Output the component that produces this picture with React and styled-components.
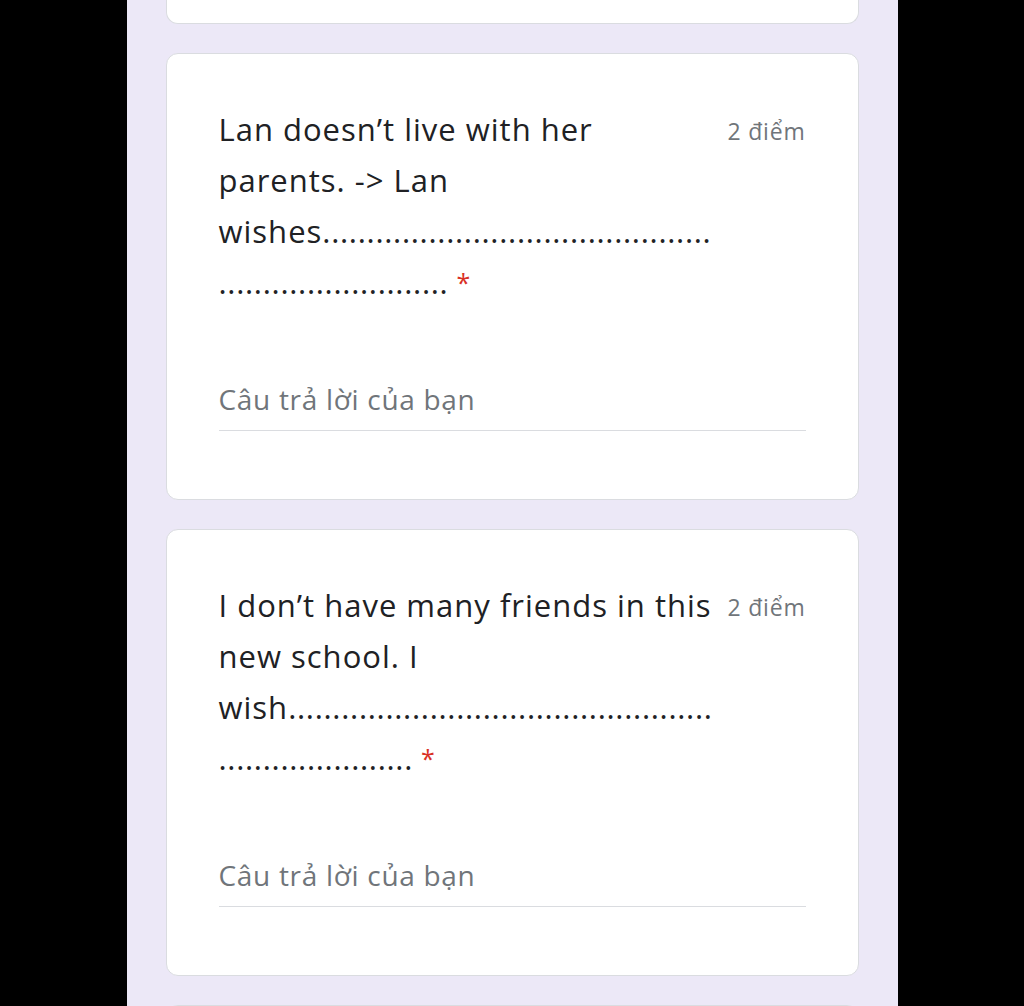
import React from 'react';
import styled, { createGlobalStyle } from 'styled-components';

const GlobalStyle = createGlobalStyle`
  html, body {
    margin: 0;
    padding: 0;
    background: #000;
  }
  body {
    font-family: "Open Sans", Roboto, sans-serif;
  }
`;

const Page = styled.div`
  width: 771px;
  height: 1006px;
  margin: 0 auto;
  padding: 0 39px;
  box-sizing: border-box;
  background: #ece8f7;
  overflow: hidden;
  display: flex;
  flex-direction: column;
  gap: 29px;
`;

const Card = styled.div`
  flex-shrink: 0;
  background: #fff;
  border: 1px solid #dadce0;
  border-radius: 12px;
  padding: 50px 52px 68px;
`;

const PrevCard = styled(Card)`
  height: 24px;
  padding: 0;
  box-sizing: border-box;
  border-top: none;
  border-radius: 0 0 12px 12px;
`;

const Header = styled.div`
  display: flex;
  justify-content: space-between;
  align-items: flex-start;
`;

const Question = styled.div`
  font-size: 31px;
  line-height: 51px;
  letter-spacing: 1px;
  color: #202124;
`;

const Line = styled.div`
  height: 51px;
  white-space: nowrap;
`;

const Dots = styled.span`
  letter-spacing: 0.7px;
`;

const Required = styled.span`
  color: #d93025;
  margin-left: 8px;
  font-size: 25px;
  line-height: 0;
  vertical-align: 2px;
`;

const Points = styled.div`
  font-size: 23px;
  line-height: 51px;
  letter-spacing: 0.8px;
  margin-top: 2px;
  color: #70757a;
  white-space: nowrap;
`;

const Answer = styled.div`
  margin-top: 73px;
  padding-bottom: 13px;
  border-bottom: 1px solid #dadce0;
  font-size: 28px;
  line-height: 36px;
  letter-spacing: 0.7px;
  color: #70757a;
`;

const dots = (n) => '.'.repeat(n);

function QuestionCard({ lines, points }) {
  return (
    <Card>
      <Header>
        <Question>
          {lines.map((line, i) => (
            <Line key={i}>
              {line.text}
              {line.dots ? <Dots>{dots(line.dots)}</Dots> : null}
              {i === lines.length - 1 && <Required>*</Required>}
            </Line>
          ))}
        </Question>
        <Points>{points}</Points>
      </Header>
      <Answer>Câu trả lời của bạn</Answer>
    </Card>
  );
}

const questions = [
  [
    { text: 'Lan doesn’t live with her' },
    { text: 'parents. -> Lan' },
    { text: 'wishes', dots: 44 },
    { text: '', dots: 26 }
  ],
  [
    { text: 'I don’t have many friends in this' },
    { text: 'new school. I' },
    { text: 'wish', dots: 48 },
    { text: '', dots: 22 }
  ]
];

export default function App() {
  return (
    <>
      <GlobalStyle />
      <Page>
        <PrevCard />
        {questions.map((lines, i) => (
          <QuestionCard key={i} lines={lines} points="2 điểm" />
        ))}
        <Card />
      </Page>
    </>
  );
}
